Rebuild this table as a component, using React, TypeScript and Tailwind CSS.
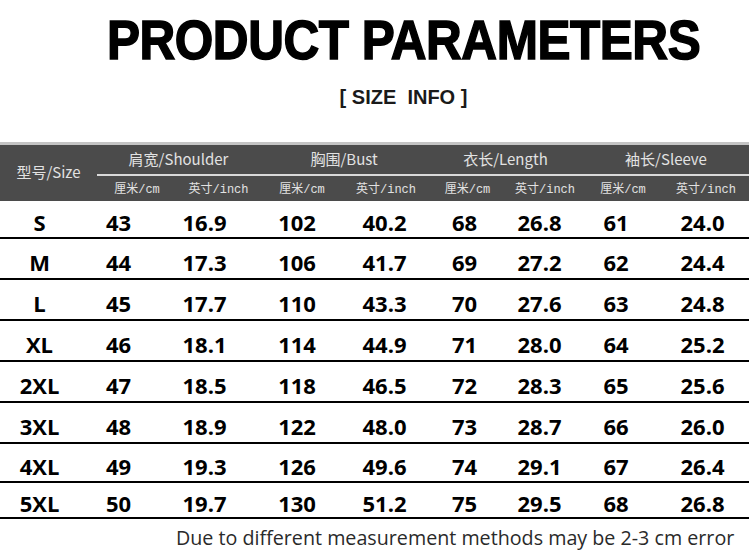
const rows = [
  { h: "h-[38px]", v: ["S", "43", "16.9", "102", "40.2", "68", "26.8", "61", "24.0"] },
  { h: "h-[41px]", v: ["M", "44", "17.3", "106", "41.7", "69", "27.2", "62", "24.4"] },
  { h: "h-[41px]", v: ["L", "45", "17.7", "110", "43.3", "70", "27.6", "63", "24.8"] },
  { h: "h-[41px]", v: ["XL", "46", "18.1", "114", "44.9", "71", "28.0", "64", "25.2"] },
  { h: "h-[41px]", v: ["2XL", "47", "18.5", "118", "46.5", "72", "28.3", "65", "25.6"] },
  { h: "h-[41px]", v: ["3XL", "48", "18.9", "122", "48.0", "73", "28.7", "66", "26.0"] },
  { h: "h-[39px]", v: ["4XL", "49", "19.3", "126", "49.6", "74", "29.1", "67", "26.4"] },
  { h: "h-[36px]", v: ["5XL", "50", "19.7", "130", "51.2", "75", "29.5", "68", "26.8"] },
];

const groups = ["肩宽/Shoulder", "胸围/Bust", "衣长/Length", "袖长/Sleeve"];

function Unit({ cjk, latin }: { cjk: string; latin: string }) {
  return (
    <span className="text-[12px] text-[#e2e2e2]">
      <span className="font-['Noto_Sans_CJK_SC',sans-serif]">{cjk}</span>
      <span className="font-['Liberation_Mono',monospace]">{latin}</span>
    </span>
  );
}

function HeaderBand() {
  return (
    <div className="border-t-[3px] border-[#c4c4c4] bg-[#4b4b4b]">
      <div className="grid h-[56px] grid-cols-[97px_80px_83px_84px_84px_79px_76px_80px_86px] grid-rows-[31px_25px] font-['Noto_Sans_CJK_SC',sans-serif] text-[#e2e2e2]">
        <div className="row-span-2 flex items-center justify-center pb-[2px] text-[15px]">型号/Size</div>
        {groups.map((g) => (
          <div key={g} className="col-span-2 flex items-center justify-center border-b-2 border-[#d9d9d9] text-[15px]">
            {g}
          </div>
        ))}
        {[0, 1, 2, 3].map((i) => (
          <>
            <div key={`c${i}`} className="flex items-center justify-center">
              <Unit cjk="厘米" latin="/cm" />
            </div>
            <div key={`i${i}`} className="flex items-center justify-center">
              <Unit cjk="英寸" latin="/inch" />
            </div>
          </>
        ))}
      </div>
    </div>
  );
}

export default function App() {
  return (
    <div className="h-[551px] w-[749px] overflow-hidden bg-white">
      <div className="flex flex-col items-center pl-[58px] pt-[13px]">
        <h1 className="origin-center scale-x-[0.9] font-['Liberation_Sans',Arial,sans-serif] text-[55px] font-bold leading-none tracking-[-0.5px] text-black [-webkit-text-stroke:1.5px_black]">
          PRODUCT PARAMETERS
        </h1>
      </div>
      <div className="mt-[19px] flex justify-center pl-[58px]">
        <p className="font-['Liberation_Sans',Arial,sans-serif] text-[20px] font-bold leading-none text-[#1a1a1a]">
          [ SIZE&nbsp; INFO ]
        </p>
      </div>
      <div className="mt-[35px]">
        <HeaderBand />
        <div className="font-['Open_Sans',sans-serif] text-[22px] font-bold text-black">
          {rows.map((r) => (
            <div
              key={r.v[0]}
              className={`grid grid-cols-[79px_79px_93px_92px_83px_77px_73px_80px_93px] items-center border-b-2 border-black pt-[6px] ${r.h}`}
            >
              {r.v.map((x, i) => (
                <div key={i} className="text-center leading-none">
                  {x}
                </div>
              ))}
            </div>
          ))}
        </div>
        <p className="mt-[4px] pl-[176px] font-['Open_Sans',sans-serif] text-[19.7px] leading-normal text-[#2a2a2a]">
          Due to different measurement methods may be 2-3 cm error
        </p>
      </div>
    </div>
  );
}
